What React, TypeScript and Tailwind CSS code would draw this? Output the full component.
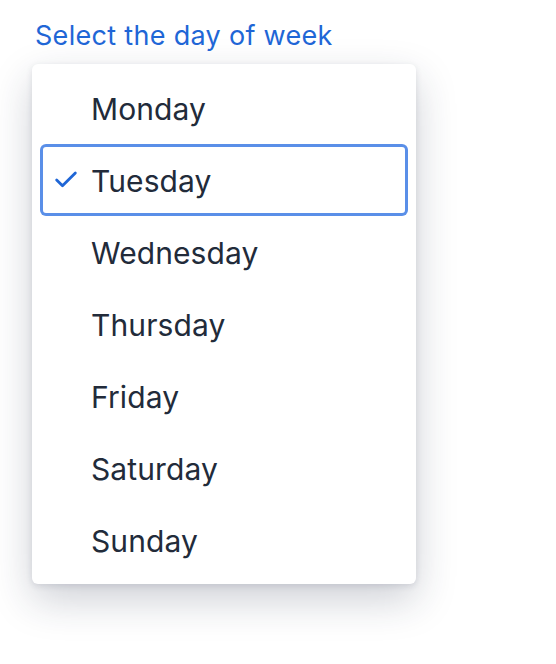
import { Check } from "lucide-react";

const days = ["Monday", "Tuesday", "Wednesday", "Thursday", "Friday", "Saturday", "Sunday"];

export default function App() {
  const selected = "Tuesday";
  return (
    <div className="min-h-[664px] w-[556px] bg-white pl-[32px] pt-[19px] font-['Inter',sans-serif]">
      <div className="pl-[3px] text-[27px] leading-[34px] tracking-[0.3px] text-[#1f66d6]">Select the day of week</div>
      <ul className="mt-[11px] w-[384px] rounded-[6px] bg-white p-[8px] shadow-[0_16px_40px_rgba(30,41,70,0.22),0_2px_6px_rgba(30,41,70,0.12)]">
        {days.map((day) => {
          const active = day === selected;
          return (
            <li
              key={day}
              className={
                "flex h-[72px] items-center rounded-[6px] " +
                (active ? "ring-[3px] ring-inset ring-[#5a8fe8]" : "")
              }
            >
              <span className="flex w-[51px] justify-end pr-[11px]">
                {active && <Check className="h-[28px] w-[28px] text-[#1f66d6]" strokeWidth={2.4} />}
              </span>
              <span className="pt-[2px] text-[30px] tracking-[0.1px] text-[#222b3a]">{day}</span>
            </li>
          );
        })}
      </ul>
    </div>
  );
}
